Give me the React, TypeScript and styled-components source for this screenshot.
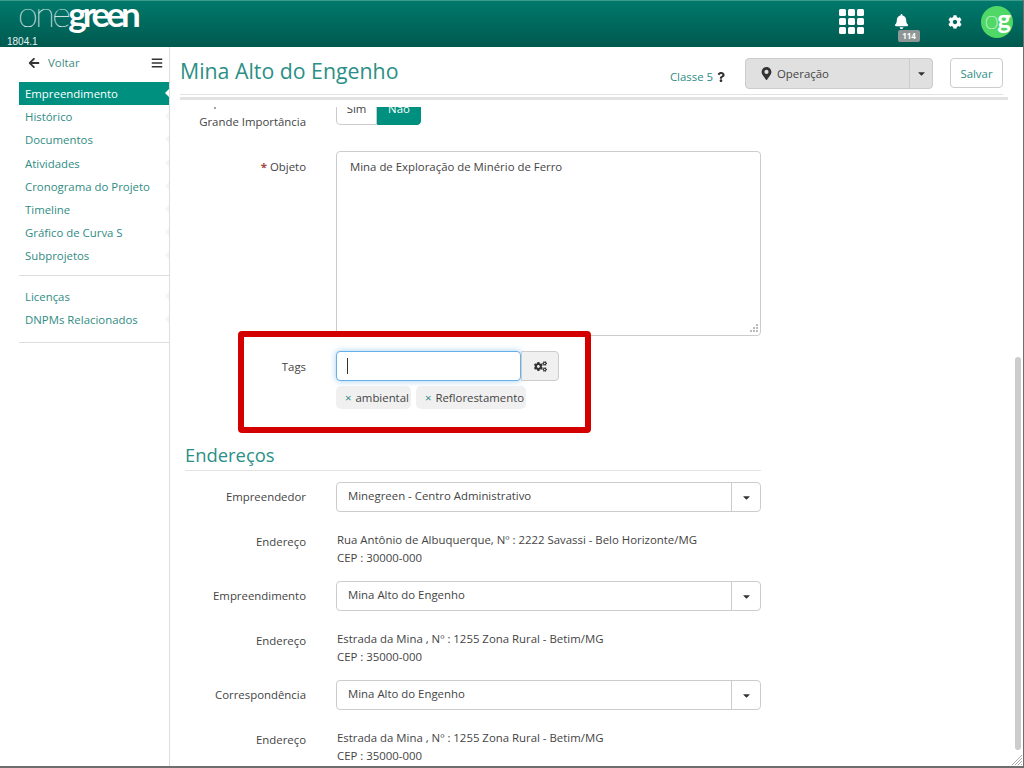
import React from "react";
import styled, { createGlobalStyle } from "styled-components";
import {
  FaArrowLeft,
  FaBars,
  FaBell,
  FaCaretDown,
  FaCog,
  FaCogs,
  FaMapMarkerAlt,
  FaQuestion,
} from "react-icons/fa";

const GlobalStyle = createGlobalStyle`
  html, body {
    margin: 0;
    height: 100%;
    overflow: hidden;
    background: #fff;
  }
  * { box-sizing: border-box; }
  body {
    font-family: "Open Sans", "Noto Sans", sans-serif;
    font-size: 11.4px;
    color: #444;
  }
`;

const Frame = styled.div`
  position: relative;
  display: flex;
  flex-direction: column;
  width: 1024px;
  height: 768px;
  border-right: 1px solid #6e6e6e;
  border-bottom: 2px solid #6e6e6e;
  overflow: hidden;
`;

const TopBar = styled.header`
  display: flex;
  align-items: flex-start;
  justify-content: space-between;
  flex: 0 0 47px;
  padding: 0 10px 0 7px;
  background: linear-gradient(#00796c, #00594f);
  border-top: 1px solid #3f9a8e;
`;

const Brand = styled.div`
  display: flex;
  flex-direction: column;
  color: #fff;
`;

const LogoText = styled.div`
  margin-left: 11px;
  height: 32px;
  font-family: Lato, sans-serif;
  font-size: 36px;
  line-height: 24px;
  letter-spacing: -2.6px;
  font-weight: 100;
  text-shadow: 0 0 0.7px #fff;
  white-space: nowrap;
`;

const LogoStrong = styled.span`
  font-size: 35px;
  font-weight: 700;
  letter-spacing: -3.9px;
  text-shadow: none;
`;

const Version = styled.div`
  margin-top: 4px;
  font-family: "Liberation Sans", sans-serif;
  font-size: 10px;
  line-height: 10px;
  color: #e6f2f0;
`;

const TopActions = styled.div`
  display: flex;
  align-items: flex-start;
`;

const AppsGrid = styled.div`
  display: grid;
  grid-template-columns: repeat(3, 7px);
  grid-auto-rows: 7px;
  gap: 2px;
  margin: 8px 30px 0 0;
`;

const AppDot = styled.span`
  background: #fff;
  border-radius: 1.5px;
`;

const BellBox = styled.div`
  position: relative;
  width: 26px;
  height: 40px;
  padding-top: 12px;
  margin-right: 28px;
  color: #fff;
  font-size: 15px;
  text-align: left;
`;

const BellBadge = styled.span`
  position: absolute;
  left: 4px;
  top: 29px;
  width: 22px;
  height: 12px;
  border-radius: 2px;
  background: #8f9796;
  color: #fff;
  font-size: 8px;
  font-weight: 700;
  line-height: 12px;
  text-align: center;
`;

const GearBox = styled.div`
  margin: 14px 19px 0 0;
  color: #fff;
  font-size: 14px;
  line-height: 14px;
`;

const Avatar = styled.div`
  width: 32px;
  height: 32px;
  margin-top: 5px;
  border-radius: 50%;
  background: #4fd866;
  color: #fff;
  font-family: Lato, sans-serif;
  font-size: 26px;
  line-height: 26px;
  letter-spacing: -1.5px;
  text-align: center;
  font-weight: 100;
  text-shadow: 0 0 0.7px #fff;
`;

const AvatarStrong = styled.span`
  font-weight: 700;
  text-shadow: none;
`;

const Body = styled.div`
  display: flex;
  flex: 1;
  min-height: 0;
`;

const Sidebar = styled.aside`
  flex: 0 0 170px;
  padding-left: 19px;
  border-right: 1px solid #ddd;
`;

const BackRow = styled.div`
  display: flex;
  align-items: center;
  height: 35px;
  padding: 0 6px 4px 9px;
  color: #3d8a82;
`;

const BackArrow = styled.span`
  display: flex;
  margin-right: 8px;
  color: #333;
  font-size: 12px;
`;

const MenuToggle = styled.span`
  display: flex;
  margin-left: auto;
  color: #333;
  font-size: 12px;
`;

const NavList = styled.nav`
  display: flex;
  flex-direction: column;
  padding-bottom: 7px;
  border-bottom: 1px solid #ddd;
  & + & {
    padding-top: 9px;
    padding-bottom: 11px;
  }
`;

const NavItem = styled.a<{ $active?: boolean }>`
  position: relative;
  display: block;
  height: 23.2px;
  padding-left: 6px;
  background: ${(p) => (p.$active ? "#00907f" : "transparent")};
  color: ${(p) => (p.$active ? "#fff" : "#2f8c83")};
  line-height: 23px;
  &::after {
    content: "";
    position: absolute;
    right: 0;
    top: 7px;
    border: 4.5px solid transparent;
    border-left-width: 0;
    border-right-color: ${(p) => (p.$active ? "#fff" : "#f5f5f5")};
  }
`;

const Main = styled.main`
  display: flex;
  flex-direction: column;
  flex: 1;
  min-width: 0;
  position: relative;
`;

const PageHead = styled.div`
  flex: 0 0 53px;
  margin: 0 15px 7px 10px;
  padding-bottom: 2px;
  border-bottom: 3px solid #e2e2e2;
`;

const HeadRow = styled.div`
  display: flex;
  align-items: flex-start;
  height: 48px;
  margin-right: 5px;
  padding-top: 11px;
  border-bottom: 1px solid #e2e2e2;
`;

const PageTitle = styled.h1`
  flex: 1;
  margin: -1px 0 0;
  color: #2a8f86;
  font-size: 21.3px;
  font-weight: 400;
  line-height: 28px;
`;

const ClassTag = styled.div`
  display: flex;
  align-items: center;
  gap: 3px;
  margin: 12px 19px 0 0;
  color: #2f8c83;
  line-height: 14px;
`;

const ClassHelp = styled.span`
  display: flex;
  color: #333;
  font-size: 10px;
`;

const StatusSelect = styled.div`
  display: flex;
  width: 188px;
  height: 31px;
  margin-right: 17px;
  background: #e0e0e0;
  border: 1px solid #ccc;
  border-radius: 4px;
`;

const StatusValue = styled.div`
  display: flex;
  flex: 1;
  align-items: center;
  gap: 4px;
  padding-left: 14px;
  color: #444;
`;

const PinIcon = styled.span`
  display: flex;
  color: #333;
  font-size: 13px;
`;

const StatusCaret = styled.div`
  display: flex;
  align-items: center;
  justify-content: center;
  width: 23px;
  border-left: 1px solid #ccc;
  color: #333;
  font-size: 11px;
`;

const SaveButton = styled.button`
  width: 53px;
  height: 30px;
  padding: 0;
  background: #fff;
  border: 1px solid #ccc;
  border-radius: 4px;
  color: #2f8c83;
  font: inherit;
`;

const Viewport = styled.div`
  flex: 1;
  min-height: 0;
  overflow: hidden;
`;

const Form = styled.div`
  position: relative;
  width: 576px;
  margin: -12px 0 0 15px;
`;

const Row = styled.div<{ $gap: number }>`
  display: grid;
  grid-template-columns: 121px 425px;
  column-gap: 30px;
  margin-bottom: ${(p) => p.$gap}px;
`;

const Label = styled.label<{ $top?: number }>`
  padding-top: ${(p) => p.$top ?? 7}px;
  color: #444;
  line-height: 17px;
  text-align: right;
`;

const TwoLineLabel = styled(Label)`
  margin-top: -3px;
  padding-top: 0;
  line-height: 20px;
`;

const Required = styled.span`
  color: #a5473f;
  font-weight: 700;
`;

const Toggle = styled.div`
  display: flex;
  height: 30px;
`;

const ToggleButton = styled.span<{ $on?: boolean }>`
  width: ${(p) => (p.$on ? 44 : 41)}px;
  border: 1px solid ${(p) => (p.$on ? "#00907f" : "#ccc")};
  border-radius: ${(p) => (p.$on ? "0 4px 4px 0" : "4px 0 0 4px")};
  background: ${(p) => (p.$on ? "#00907f" : "#fff")};
  color: ${(p) => (p.$on ? "#fff" : "#444")};
  line-height: 26px;
  text-align: center;
`;

const TextArea = styled.div`
  position: relative;
  height: 185px;
  padding: 6px 13px;
  border: 1px solid #ccc;
  border-radius: 4px;
  line-height: 17px;
`;

const ResizeGrip = styled.svg`
  position: absolute;
  right: 2px;
  bottom: 2px;
`;

const TagInputRow = styled.div`
  display: flex;
`;

const TagInput = styled.div`
  display: flex;
  align-items: center;
  width: 185px;
  height: 30px;
  padding-left: 10px;
  border: 1px solid #66afe9;
  border-radius: 4px;
  box-shadow: 0 0 6px rgba(102, 175, 233, 0.6);
  background: #fff;
`;

const Caret = styled.span`
  width: 1px;
  height: 16px;
  background: #333;
`;

const TagButton = styled.div`
  display: flex;
  align-items: center;
  justify-content: center;
  width: 38px;
  height: 30px;
  background: #f0f0f0;
  border: 1px solid #ccc;
  border-radius: 0 4px 4px 0;
  color: #333;
  font-size: 13px;
`;

const ChipList = styled.div`
  display: flex;
  gap: 5px;
  margin-top: 5px;
`;

const Chip = styled.span`
  height: 23px;
  padding: 0 2px 0 9px;
  background: #f0f0f0;
  border-radius: 5px;
  color: #444;
  line-height: 23px;
`;

const ChipClose = styled.span`
  margin-right: 4px;
  color: #2f8c83;
`;

const Highlight = styled.div`
  position: absolute;
  left: 53px;
  top: 236px;
  width: 353px;
  height: 102px;
  border: 6px solid #d40000;
  border-radius: 4px;
  pointer-events: none;
`;

const SectionTitle = styled.h2`
  margin: 0 0 11px;
  padding-bottom: 2px;
  border-bottom: 1px solid #e2e2e2;
  color: #2a8f86;
  font-size: 18.4px;
  font-weight: 400;
  line-height: 26px;
`;

const SelectBox = styled.div`
  display: flex;
  height: 30px;
  border: 1px solid #ccc;
  border-radius: 4px;
`;

const SelectValue = styled.div`
  flex: 1;
  padding-left: 11px;
  line-height: 26px;
`;

const SelectCaret = styled.div`
  display: flex;
  align-items: center;
  justify-content: center;
  width: 29px;
  border-left: 1px solid #ccc;
  color: #333;
  font-size: 11px;
`;

const AddressText = styled.div`
  padding-top: 6px;
  padding-left: 1px;
  line-height: 18px;
`;

const Scrollbar = styled.div`
  position: absolute;
  right: 2px;
  top: 310px;
  width: 6px;
  height: 393px;
  border-radius: 3px;
  background: #ccc;
`;

const WindowGrip = styled.svg`
  position: absolute;
  right: 0;
  bottom: 0;
`;

const sideMain = [
  "Empreendimento",
  "Histórico",
  "Documentos",
  "Atividades",
  "Cronograma do Projeto",
  "Timeline",
  "Gráfico de Curva S",
  "Subprojetos",
];

const sideExtra = ["Licenças", "DNPMs Relacionados"];

const addresses = [
  {
    label: "Empreendedor",
    value: "Minegreen - Centro Administrativo",
    line: "Rua Antônio de Albuquerque, Nº : 2222 Savassi - Belo Horizonte/MG",
    cep: "CEP : 30000-000",
  },
  {
    label: "Empreendimento",
    value: "Mina Alto do Engenho",
    line: "Estrada da Mina , Nº : 1255 Zona Rural - Betim/MG",
    cep: "CEP : 35000-000",
  },
  {
    label: "Correspondência",
    value: "Mina Alto do Engenho",
    line: "Estrada da Mina , Nº : 1255 Zona Rural - Betim/MG",
    cep: "CEP : 35000-000",
  },
];

export default function App() {
  return (
    <Frame>
      <GlobalStyle />
      <TopBar>
        <Brand>
          <LogoText>
            one<LogoStrong>green</LogoStrong>
          </LogoText>
          <Version>1804.1</Version>
        </Brand>
        <TopActions>
          <AppsGrid>
            {Array.from({ length: 9 }).map((_, i) => (
              <AppDot key={i} />
            ))}
          </AppsGrid>
          <BellBox>
            <FaBell />
            <BellBadge>114</BellBadge>
          </BellBox>
          <GearBox>
            <FaCog />
          </GearBox>
          <Avatar>
            o<AvatarStrong>g</AvatarStrong>
          </Avatar>
        </TopActions>
      </TopBar>
      <Body>
        <Sidebar>
          <BackRow>
            <BackArrow>
              <FaArrowLeft />
            </BackArrow>
            Voltar
            <MenuToggle>
              <FaBars />
            </MenuToggle>
          </BackRow>
          <NavList>
            {sideMain.map((item, i) => (
              <NavItem key={item} $active={i === 0}>
                {item}
              </NavItem>
            ))}
          </NavList>
          <NavList>
            {sideExtra.map((item) => (
              <NavItem key={item}>{item}</NavItem>
            ))}
          </NavList>
        </Sidebar>
        <Main>
          <PageHead>
            <HeadRow>
              <PageTitle>Mina Alto do Engenho</PageTitle>
              <ClassTag>
                Classe 5
                <ClassHelp>
                  <FaQuestion />
                </ClassHelp>
              </ClassTag>
              <StatusSelect>
                <StatusValue>
                  <PinIcon>
                    <FaMapMarkerAlt />
                  </PinIcon>
                  Operação
                </StatusValue>
                <StatusCaret>
                  <FaCaretDown />
                </StatusCaret>
              </StatusSelect>
              <SaveButton>Salvar</SaveButton>
            </HeadRow>
          </PageHead>
          <Viewport>
            <Form>
              <Row $gap={19}>
                <TwoLineLabel>
                  Empreendimento de
                  <br />
                  Grande Importância
                </TwoLineLabel>
                <Toggle>
                  <ToggleButton>Sim</ToggleButton>
                  <ToggleButton $on>Não</ToggleButton>
                </Toggle>
              </Row>
              <Row $gap={15}>
                <Label>
                  <Required>*</Required> Objeto
                </Label>
                <TextArea>
                  Mina de Exploração de Minério de Ferro
                  <ResizeGrip width="10" height="10" viewBox="0 0 10 10">
                    <path
                      d="M8 1h2v2H8zM5 4h2v2H5zM8 4h2v2H8zM2 7h2v2H2zM5 7h2v2H5zM8 7h2v2H8z"
                      fill="#bbb"
                    />
                  </ResizeGrip>
                </TextArea>
              </Row>
              <Row $gap={33}>
                <Label>Tags</Label>
                <div>
                  <TagInputRow>
                    <TagInput>
                      <Caret />
                    </TagInput>
                    <TagButton>
                      <FaCogs />
                    </TagButton>
                  </TagInputRow>
                  <ChipList>
                    <Chip>
                      <ChipClose>×</ChipClose>ambiental
                    </Chip>
                    <Chip>
                      <ChipClose>×</ChipClose>Reflorestamento
                    </Chip>
                  </ChipList>
                </div>
              </Row>
              <SectionTitle>Endereços</SectionTitle>
              {addresses.map((a) => (
                <React.Fragment key={a.label}>
                  <Row $gap={13}>
                    <Label $top={6}>{a.label}</Label>
                    <SelectBox>
                      <SelectValue>{a.value}</SelectValue>
                      <SelectCaret>
                        <FaCaretDown />
                      </SelectCaret>
                    </SelectBox>
                  </Row>
                  <Row $gap={14}>
                    <Label $top={8}>Endereço</Label>
                    <AddressText>
                      {a.line}
                      <br />
                      {a.cep}
                    </AddressText>
                  </Row>
                </React.Fragment>
              ))}
              <Highlight />
            </Form>
          </Viewport>
          <Scrollbar />
        </Main>
      </Body>
      <WindowGrip width="12" height="12" viewBox="0 0 12 12">
        <path d="M11 1L1 11M11 4L4 11M11 7L7 11M11 10L10 11" stroke="#aaa" fill="none" />
      </WindowGrip>
    </Frame>
  );
}
